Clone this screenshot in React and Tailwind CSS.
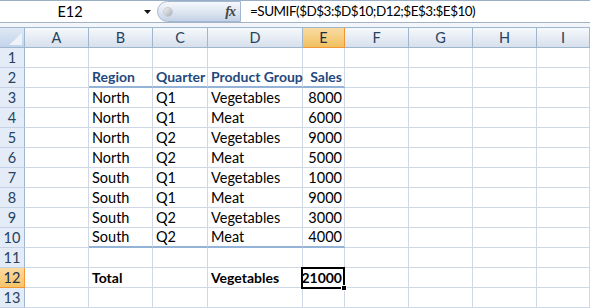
import clsx from 'clsx'

const COLS = ['A', 'B', 'C', 'D', 'E', 'F', 'G', 'H', 'I']

const sales = [
  ['North', 'Q1', 'Vegetables', 8000],
  ['North', 'Q1', 'Meat', 6000],
  ['North', 'Q2', 'Vegetables', 9000],
  ['North', 'Q2', 'Meat', 5000],
  ['South', 'Q1', 'Vegetables', 1000],
  ['South', 'Q1', 'Meat', 9000],
  ['South', 'Q2', 'Vegetables', 3000],
  ['South', 'Q2', 'Meat', 4000],
]

const Cell = ({ children, className, right }) => (
  <div
    className={clsx(
      'relative h-[20px] border-r border-b border-[#d0d7e5] flex items-center whitespace-nowrap leading-[20px] text-[14.5px]',
      right ? 'justify-end pr-[2px]' : 'px-[3px]',
      className
    )}
  >
    {children}
  </div>
)

const RowHead = ({ n, active }) => (
  <div
    className={clsx(
      'h-[20px] border-r border-b flex items-center justify-center text-[14.5px]',
      active
        ? 'bg-linear-to-b from-[#fbdba0] to-[#f6c368] border-[#f29536] text-[#1b2f47]'
        : 'bg-[#e4ecf7] border-r-[#9eb6ce] border-b-[#c5d2e3] text-[#27415f]'
    )}
  >
    {n}
  </div>
)

const FormulaBar = () => (
  <div className="h-[27px] border-t border-[#9aaec6] flex flex-col">
    <div className="h-[21px] flex items-center bg-white">
      <div className="w-[140px] text-center text-[14.5px] text-black">E12</div>
      <div className="w-[17px] flex items-center pl-[4px]">
        <svg width="7" height="4" viewBox="0 0 7 4">
          <path d="M0 0h7L3.5 4z" fill="#111" />
        </svg>
      </div>
      <div className="w-[84px] h-[21px] rounded-l-[11px] border border-[#a4b7d1] bg-linear-to-b from-[#f6f8fc] via-[#dfe7f2] to-[#c4d2e6] flex items-center">
        <div className="ml-[5px] w-[10px] h-[10px] rounded-full bg-linear-to-br from-[#f2f2f2] to-[#a9aeb5] border border-[#c8ccd2]" />
        <span className="ml-auto mr-[5px] font-['Liberation_Serif',serif] italic font-bold text-[14px] text-[#444] tracking-[-1px]">
          fx
        </span>
      </div>
      <div className="pl-[9px] text-[13.5px] tracking-[-0.5px] text-black whitespace-nowrap">
        =SUMIF($D$3:$D$10;D12;$E$3:$E$10)
      </div>
    </div>
    <div className="h-[1px] bg-[#a3b3c7]" />
    <div className="flex-1 bg-[#f2f5f9]" />
  </div>
)

const tableHead = 'font-bold text-[14px] text-[#1f497d] border-b-2 border-b-[#95b3d7]'
const tableEnd = 'border-b-2 border-b-[#95b3d7]'

export default function App() {
  const rows = []

  // row 1
  rows.push(
    <RowHead key="h1" n={1} />,
    ...COLS.map((c) => <Cell key={`1${c}`} />)
  )

  // row 2 - table header
  rows.push(
    <RowHead key="h2" n={2} />,
    <Cell key="2A" />,
    <Cell key="2B" className={tableHead}>Region</Cell>,
    <Cell key="2C" className={tableHead}>Quarter</Cell>,
    <Cell key="2D" className={tableHead}>Product Group</Cell>,
    <Cell key="2E" right className={tableHead}>Sales</Cell>,
    <Cell key="2F" />,
    <Cell key="2G" />,
    <Cell key="2H" />,
    <Cell key="2I" />
  )

  sales.forEach((r, i) => {
    const n = i + 3
    const last = i === sales.length - 1
    rows.push(
      <RowHead key={`h${n}`} n={n} />,
      <Cell key={`${n}A`} />,
      <Cell key={`${n}B`} className={last && tableEnd}>{r[0]}</Cell>,
      <Cell key={`${n}C`} className={last && tableEnd}>{r[1]}</Cell>,
      <Cell key={`${n}D`} className={last && tableEnd}>{r[2]}</Cell>,
      <Cell key={`${n}E`} right className={last && tableEnd}>{r[3]}</Cell>,
      <Cell key={`${n}F`} />,
      <Cell key={`${n}G`} />,
      <Cell key={`${n}H`} />,
      <Cell key={`${n}I`} />
    )
  })

  rows.push(
    <RowHead key="h11" n={11} />,
    ...COLS.map((c) => <Cell key={`11${c}`} />)
  )

  rows.push(
    <RowHead key="h12" n={12} active />,
    <Cell key="12A" />,
    <Cell key="12B" className="font-bold text-[14px]">Total</Cell>,
    <Cell key="12C" />,
    <Cell key="12D" className="font-bold text-[14px]">Vegetables</Cell>,
    <Cell key="12E" right className="font-bold text-[14px] z-10">
      21000
      <div className="absolute -left-[2px] -top-[1px] -right-[1px] -bottom-[2px] border-2 border-black" />
      <div className="absolute -right-[3px] -bottom-[4px] w-[6px] h-[6px] bg-black border border-white" />
    </Cell>,
    <Cell key="12F" />,
    <Cell key="12G" />,
    <Cell key="12H" />,
    <Cell key="12I" />
  )

  rows.push(
    <RowHead key="h13" n={13} />,
    ...COLS.map((c) => <Cell key={`13${c}`} />)
  )

  return (
    <div className="w-[590px] h-[308px] overflow-hidden bg-white font-['Lato',sans-serif] text-[14px] text-black">
      <FormulaBar />
      <div className="grid grid-cols-[25px_64px_64px_55px_95px_42px_64px_64px_64px_1fr]">
        {/* corner */}
        <div className="h-[21px] border-t border-r border-b border-[#9eb6ce] bg-linear-to-b from-[#dfe8f4] to-[#c3d4ea] relative">
          <svg className="absolute left-0 top-0" width="24" height="19" viewBox="0 0 24 19">
            <path d="M9 17H22V5z" fill="#eef3fa" />
          </svg>
        </div>
        {COLS.map((c) => (
          <div
            key={c}
            className={clsx(
              'h-[21px] border-t border-r border-b flex items-center justify-center text-[14.5px]',
              c === 'E'
                ? 'bg-linear-to-b from-[#f9dba2] to-[#f1c15f] border-[#f29536] border-t-[#9eb6ce] text-[#1b2f47]'
                : 'bg-linear-to-b from-[#f6f9fc] to-[#d7e0ec] border-[#9eb6ce] text-[#27415f]'
            )}
          >
            {c}
          </div>
        ))}
        {rows}
      </div>
    </div>
  )
}
